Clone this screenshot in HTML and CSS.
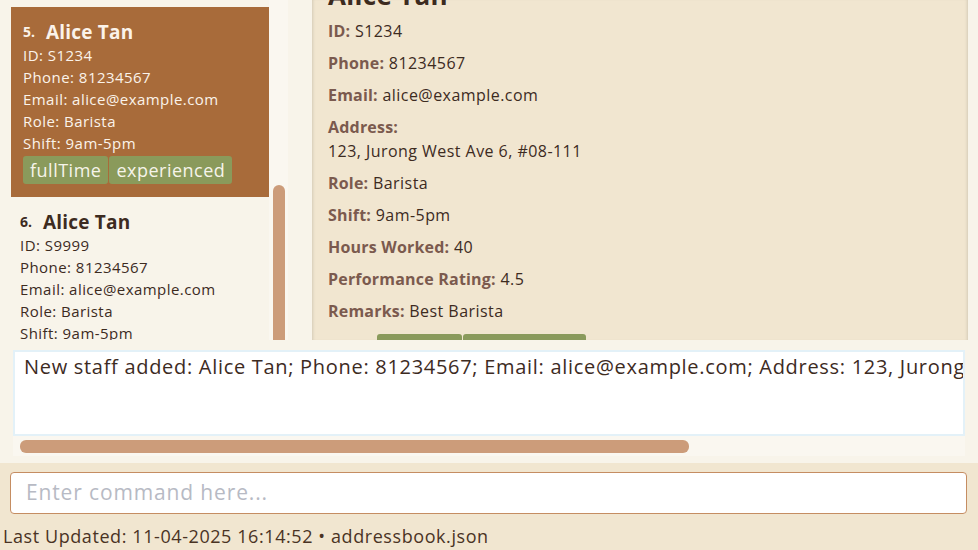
FILE: index.html
```html
<!DOCTYPE html>
<html>
<head>
<meta charset="utf-8">
<link rel="stylesheet" href="styles.css">
</head>
<body>
<div class="app">
  <div class="main">
    <div class="list">
      <div class="cards">
        <div class="card selected">
          <div class="name-row"><span class="idx">5.</span><span class="name">Alice Tan</span></div>
          <div class="line">ID: S1234</div>
          <div class="line">Phone: 81234567</div>
          <div class="line">Email: alice@example.com</div>
          <div class="line">Role: Barista</div>
          <div class="line">Shift: 9am-5pm</div>
          <div class="tags"><span class="tag">fullTime</span><span class="tag">experienced</span></div>
        </div>
        <div class="card">
          <div class="name-row"><span class="idx">6.</span><span class="name">Alice Tan</span></div>
          <div class="line">ID: S9999</div>
          <div class="line">Phone: 81234567</div>
          <div class="line">Email: alice@example.com</div>
          <div class="line">Role: Barista</div>
          <div class="line">Shift: 9am-5pm</div>
          <div class="tags"><span class="tag">fullTime</span><span class="tag">experienced</span></div>
        </div>
      </div>
      <div class="vtrack"><div class="vthumb"></div></div>
    </div>
    <div class="detail">
      <div class="detail-inner">
        <div class="d-title">Alice Tan</div>
        <div class="d-row"><span class="lbl">ID:</span> S1234</div>
        <div class="d-row"><span class="lbl">Phone:</span> 81234567</div>
        <div class="d-row"><span class="lbl">Email:</span> alice@example.com</div>
        <div class="d-row"><div class="lbl">Address:</div><div>123, Jurong West Ave 6, #08-111</div></div>
        <div class="d-row"><span class="lbl">Role:</span> Barista</div>
        <div class="d-row"><span class="lbl">Shift:</span> 9am-5pm</div>
        <div class="d-row"><span class="lbl">Hours Worked:</span> 40</div>
        <div class="d-row"><span class="lbl">Performance Rating:</span> 4.5</div>
        <div class="d-row"><span class="lbl">Remarks:</span> Best Barista</div>
        <div class="d-tags"><span class="tag">fullTime</span><span class="tag">experienced</span></div>
      </div>
    </div>
    <div class="edge"></div>
  </div>
  <div class="result-area">
    <div class="result-box">New staff added: Alice Tan; Phone: 81234567; Email: alice@example.com; Address: 123, Jurong West Ave 6, #08-111; Role: Barista; Shift: 9am-5pm</div>
    <div class="htrack"><div class="hthumb"></div></div>
  </div>
  <div class="command-area">
    <div class="command-box">Enter command here...</div>
    <div class="status">Last Updated: 11-04-2025 16:14:52 • addressbook.json</div>
  </div>
</div>
</body>
</html>
```

FILE: styles.css
```css
* { box-sizing: border-box; }
html, body { margin: 0; padding: 0; }
body {
  width: 978px;
  height: 550px;
  overflow: hidden;
  background: #f8f4ea;
  font-family: "Open Sans", sans-serif;
  color: #3d2b1f;
}
.app { display: flex; flex-direction: column; height: 550px; }

.main { display: flex; height: 340px; overflow: hidden; }

.list { width: 312px; display: flex; background: #f8f4ea; }
.cards { width: 270px; padding-left: 11px; padding-top: 7px; overflow: hidden; }
.card { padding: 12px 0 13px 9px; width: 259px; }
.card.selected { background: #a86b3a; color: #fbf3ea; padding-left: 12px; }
.name-row { height: 25px; display: flex; align-items: center; }
.idx { font-weight: 700; font-size: 14px; width: 23px; }
.name { font-weight: 700; font-size: 19px; letter-spacing: 0.2px; }
.line { font-size: 15px; line-height: 22px; height: 22px; white-space: nowrap; letter-spacing: 0.45px; }
.tags { display: flex; gap: 1px; margin-top: 2px; }
.tag {
  background: #8a9a5b;
  color: #f6f4ea;
  font-size: 18px;
  letter-spacing: 0.5px;
  height: 28px;
  line-height: 28px;
  padding: 0 7px;
  border-radius: 3px;
}
.vtrack { width: 19px; margin-left: -1px; background: #faf7f0; padding-top: 185px; display: flex; justify-content: center; }
.vthumb { width: 12px; height: 200px; background: #cc9c7a; border-radius: 6px; }

.detail {
  width: 656px;
  background: #f1e6d0;
  overflow: hidden;
  box-shadow: inset 3px 0 3px -2px rgba(0,0,0,0.12), inset -3px 0 3px -2px rgba(0,0,0,0.12);
}
.detail-inner { margin-top: -21px; padding-left: 16px; display: flex; flex-direction: column; gap: 8px; }
.d-title { font-size: 26px; font-weight: 700; line-height: 32px; letter-spacing: 0.3px; }
.d-row { font-size: 16px; line-height: 24px; white-space: nowrap; letter-spacing: 0.45px; }
.lbl { font-weight: 700; font-size: 16px; line-height: 24px; color: #7b5a4e; letter-spacing: 0.2px; }
.d-tags { display: flex; gap: 1px; margin-left: 49px; margin-top: 3px; }
.edge { flex: 1; background: #f8f4ea; }

.result-area { height: 123px; background: #f8f4ea; padding: 10px 13px 0 13px; }
.result-box {
  width: 952px;
  height: 86px;
  background: #fff;
  border: 2px solid #e3f1f8;
  font-size: 20px;
  letter-spacing: 0.7px;
  line-height: 28px;
  padding: 1px 0 0 9px;
  white-space: nowrap;
  overflow: hidden;
}
.htrack { height: 20px; width: 952px; background: #faf7f0; padding: 4px 0 0 7px; }
.hthumb { width: 669px; height: 13px; background: #cc9c7a; border-radius: 6px; }

.command-area { flex: 1; background: #f1e6d0; padding: 9px 11px 0 10px; }
.command-box {
  height: 42px;
  background: #fff;
  border: 1.5px solid #c58d62;
  border-radius: 4px;
  font-size: 21px;
  letter-spacing: 0.86px;
  line-height: 39px;
  padding-left: 15px;
  color: #b7bac4;
}
.status { font-size: 18px; letter-spacing: 0.58px; line-height: 24px; margin-top: 10px; margin-left: -7px; color: #4a3324; white-space: nowrap; }
```
